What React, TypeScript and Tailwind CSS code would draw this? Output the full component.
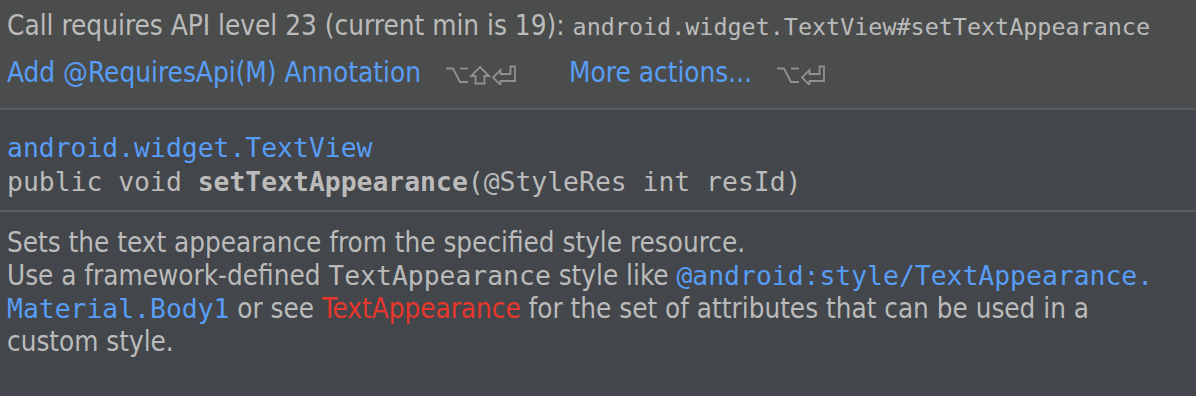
import React from "react";

const sans = "font-['DejaVu_Sans_Condensed','DejaVu_Sans',sans-serif]";
const mono = "font-['DejaVu_Sans_Mono','Liberation_Mono',monospace]";

function OptionKey() {
  return (
    <svg width="24" height="20" viewBox="0 0 24 20" fill="none" stroke="#8e9091" strokeWidth="1.8" strokeLinejoin="miter">
      <path d="M1 3.5 H8 L15 17 H23" />
      <path d="M15 3.5 H23" />
    </svg>
  );
}

function ShiftKey() {
  return (
    <svg width="22" height="20" viewBox="0 0 22 20" fill="none" stroke="#8e9091" strokeWidth="1.8" strokeLinejoin="miter">
      <path d="M11 2 L20 11 H15.5 V18.5 H6.5 V11 H2 Z" />
    </svg>
  );
}

function ReturnKey() {
  return (
    <svg width="26" height="20" viewBox="0 0 26 20" fill="none" stroke="#8e9091" strokeWidth="1.8" strokeLinejoin="miter">
      <path d="M2 12.5 L9.5 5 V9 H19.5 V1.5 H24 V16 H9.5 V20 Z" />
    </svg>
  );
}

export default function App() {
  return (
    <div className="w-[1196px] h-[396px] overflow-hidden bg-[#43464a] flex flex-col">
      <div className={`bg-[#4b4d4d] h-[108px] pl-[7px] pt-[3px] text-[#bbbbbb] ${sans} text-[27.7px] leading-[45px] whitespace-nowrap`}>
        <div>
          Call requires API level 23 (current min is 19):{" "}
          <span className={`${mono} text-[23.4px]`}>android.widget.TextView#setTextAppearance</span>
        </div>
        <div className="flex items-center">
          <span className="text-[#589df6]">Add @RequiresApi(M) Annotation</span>
          <span className="flex items-center ml-[24px] mt-[4px]">
            <OptionKey />
            <ShiftKey />
            <ReturnKey />
          </span>
          <span className="text-[#589df6] ml-[52px]">More actions...</span>
          <span className="flex items-center ml-[24px] mt-[4px]">
            <OptionKey />
            <ReturnKey />
          </span>
        </div>
      </div>
      <div className="h-[2px] bg-[#5b5e60]" />
      <div className={`h-[100px] pl-[7px] pt-[21px] ${mono} text-[26.4px] leading-[34px] text-[#bbbbbb] whitespace-nowrap`}>
        <div className="text-[#589df6]">android.widget.TextView</div>
        <div>
          public void <span className="font-bold">setTextAppearance</span>(@StyleRes int resId)
        </div>
      </div>
      <div className="h-[2px] bg-[#5b5e60]" />
      <div className={`pl-[7px] pt-[14px] ${sans} text-[27.6px] leading-[33px] text-[#bbbbbb] whitespace-nowrap`}>
        Sets the text appearance from the specified style resource.
        <br />
        Use a framework-defined <span className={`${mono} text-[26.4px]`}>TextAppearance</span> style like{" "}
        <span className={`${mono} text-[26.4px] text-[#589df6]`}>@android:style/TextAppearance.</span>
        <br />
        <span className={`${mono} text-[26.4px] text-[#589df6]`}>Material.Body1</span> or see{" "}
        <span className="text-[#e8372c]">TextAppearance</span> for the set of attributes that can be used in a
        <br />
        custom style.
      </div>
    </div>
  );
}
